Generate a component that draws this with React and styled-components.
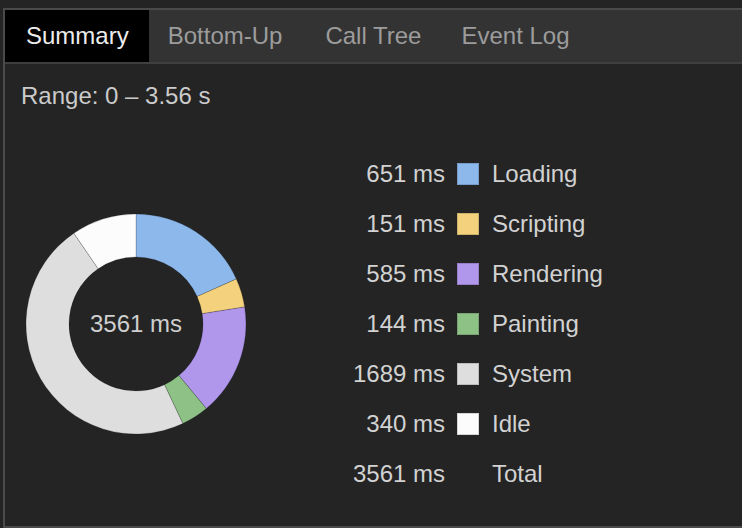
import React from "react";
import styled, { createGlobalStyle } from "styled-components";

const GlobalStyle = createGlobalStyle`
  html, body {
    margin: 0;
    padding: 0;
    background: #242424;
    font-family: "Liberation Sans", Arial, sans-serif;
    overflow: hidden;
  }
`;

const slices = [
  { label: "Loading", value: 651, color: "#8db8ec" },
  { label: "Scripting", value: 151, color: "#f4d27d" },
  { label: "Rendering", value: 585, color: "#b097ec" },
  { label: "Painting", value: 144, color: "#8ec186" },
  { label: "System", value: 1689, color: "#dedede" },
  { label: "Idle", value: 340, color: "#fcfcfc" },
];

const tabs = ["Summary", "Bottom-Up", "Call Tree", "Event Log"];

const Panel = styled.div`
  margin: 8px 0 0 3px;
  height: 516px;
  border-top: 2px solid #4a4a4a;
  border-left: 2px solid #4a4a4a;
  border-bottom: 2px solid #4a4a4a;
  background: #242424;
  display: flex;
  flex-direction: column;
`;

const TabBar = styled.div`
  display: flex;
  height: 52px;
  background: #333333;
  border-bottom: 2px solid #3f3f3f;
`;

const Tab = styled.div`
  display: flex;
  align-items: center;
  padding: 0 ${(p) => p.$pr}px 0 ${(p) => p.$pl}px;
  font-size: 24px;
  color: ${(p) => (p.$active ? "#ececec" : "#9c9c9c")};
  background: ${(p) => (p.$active ? "#000" : "transparent")};
`;

const Range = styled.div`
  padding: 18px 0 0 16px;
  font-size: 24px;
  color: #cbcbcb;
`;

const Body = styled.div`
  display: flex;
  align-items: center;
  margin-top: 39px;
`;

const ChartWrap = styled.div`
  position: relative;
  width: 222px;
  height: 222px;
  margin-left: 20px;
`;

const CenterLabel = styled.div`
  position: absolute;
  inset: 0;
  display: flex;
  align-items: center;
  justify-content: center;
  font-size: 24px;
  color: #cfcfcf;
`;

const Legend = styled.div`
  display: grid;
  grid-template-columns: 106px 22px auto;
  column-gap: 12px;
  margin-left: 92px;
`;

const Value = styled.div`
  text-align: right;
  font-size: 24px;
  line-height: 50px;
  color: #d2d2d2;
`;

const Swatch = styled.div`
  align-self: center;
  width: 20px;
  height: 20px;
  margin-top: -1px;
  background: ${(p) => p.$color};
  border: 1px solid rgba(0, 0, 0, 0.15);
`;

const Label = styled.div`
  font-size: 24px;
  line-height: 50px;
  color: #d2d2d2;
  padding-left: 1px;
`;

const tabPad = [
  [21, 20],
  [19, 22],
  [21, 20],
  [20, 20],
];

function Donut() {
  const total = slices.reduce((s, x) => s + x.value, 0);
  const cx = 111;
  const cy = 111;
  const R = 110;
  const r = 67;
  let acc = 0;
  const pt = (rad, a) => [cx + rad * Math.sin(a), cy - rad * Math.cos(a)];
  return (
    <svg width="222" height="222" viewBox="0 0 222 222">
      {slices.map((s) => {
        const a0 = (acc / total) * Math.PI * 2;
        acc += s.value;
        const a1 = (acc / total) * Math.PI * 2;
        const large = a1 - a0 > Math.PI ? 1 : 0;
        const [x0, y0] = pt(R, a0);
        const [x1, y1] = pt(R, a1);
        const [x2, y2] = pt(r, a1);
        const [x3, y3] = pt(r, a0);
        const d = `M${x0} ${y0} A${R} ${R} 0 ${large} 1 ${x1} ${y1} L${x2} ${y2} A${r} ${r} 0 ${large} 0 ${x3} ${y3} Z`;
        return (
          <path
            key={s.label}
            d={d}
            fill={s.color}
            stroke="rgba(0,0,0,0.3)"
            strokeWidth="0.6"
          />
        );
      })}
    </svg>
  );
}

export default function App() {
  return (
    <>
      <GlobalStyle />
      <Panel>
        <TabBar>
          {tabs.map((t, i) => (
            <Tab key={t} $active={i === 0} $pl={tabPad[i][0]} $pr={tabPad[i][1]}>
              {t}
            </Tab>
          ))}
        </TabBar>
        <Range>Range: 0 – 3.56 s</Range>
        <Body>
          <ChartWrap>
            <Donut />
            <CenterLabel>3561 ms</CenterLabel>
          </ChartWrap>
          <Legend>
            {slices.map((s) => (
              <React.Fragment key={s.label}>
                <Value>{s.value} ms</Value>
                <Swatch $color={s.color} />
                <Label>{s.label}</Label>
              </React.Fragment>
            ))}
            <Value>3561 ms</Value>
            <div />
            <Label>Total</Label>
          </Legend>
        </Body>
      </Panel>
    </>
  );
}
